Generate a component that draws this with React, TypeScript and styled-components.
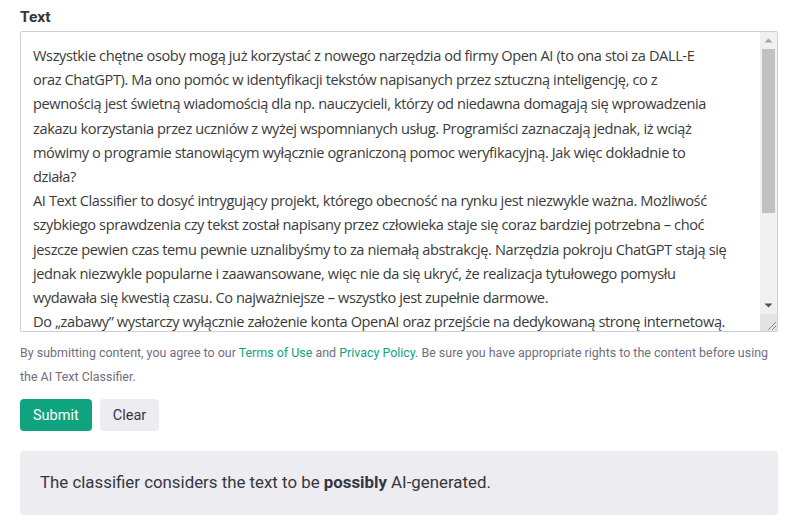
import React from 'react';
import styled, { createGlobalStyle } from 'styled-components';

const COLORS = {
  text: '#353740',
  muted: '#6e6e80',
  green: '#10a37f',
  grey: '#ececf1',
  border: '#cfcfd6',
  track: '#f0f0f0',
  thumb: '#c1c1c1',
};

const GlobalStyle = createGlobalStyle`
  html, body {
    margin: 0;
    padding: 0;
    background: #ffffff;
  }
  body {
    font-family: Roboto, "Liberation Sans", sans-serif;
    color: ${COLORS.text};
  }
`;

const Page = styled.div`
  padding: 6px 20px 16px 20px;
  display: flex;
  flex-direction: column;
`;

const Label = styled.label`
  font-size: 15.5px;
  font-weight: 700;
  line-height: 22px;
  margin-bottom: 3px;
`;

const TextBox = styled.div`
  box-sizing: border-box;
  height: 301px;
  border: 1px solid ${COLORS.border};
  border-radius: 2px;
  display: flex;
  overflow: hidden;
`;

const Content = styled.div`
  flex: 1;
  min-width: 0;
  padding: 11px 12px;
  overflow: hidden;
  white-space: pre;
  font-family: "Open Sans", "Noto Sans", sans-serif;
  font-size: 14.6px;
  letter-spacing: -0.4px;
  line-height: 24.2px;
  color: #3b3b3b;
`;

// the page is shot headless, where native scrollbars are hidden, so draw one
const ScrollBar = styled.div`
  width: 17px;
  flex: none;
  display: flex;
  flex-direction: column;
  background: ${COLORS.track};
`;

const ArrowButton = styled.div`
  height: 17px;
  flex: none;
  display: flex;
  align-items: center;
  justify-content: center;
`;

const Track = styled.div`
  flex: 1;
  padding: 0 2px;
`;

const Thumb = styled.div`
  height: 164px;
  background: ${COLORS.thumb};
`;

const Resizer = styled.div`
  height: 17px;
  flex: none;
  background: #e3e3e3;
  display: flex;
  align-items: flex-end;
  justify-content: flex-end;
`;

const Misspelled = styled.span`
  text-decoration: underline wavy #e0302a;
  text-decoration-thickness: 1px;
  text-underline-offset: 3px;
`;

const Note = styled.p`
  margin: 9px 0 0 0;
  font-size: 12.45px;
  line-height: 24px;
  color: ${COLORS.muted};
`;

const Link = styled.a`
  color: ${COLORS.green};
  text-decoration: none;
`;

const Actions = styled.div`
  display: flex;
  gap: 8px;
  margin-top: 10px;
`;

const Button = styled.button<{ primary?: boolean }>`
  height: 32px;
  padding: 0 13px;
  border: none;
  border-radius: 4px;
  font-family: Roboto, "Liberation Sans", sans-serif;
  font-size: 14.5px;
  cursor: pointer;
  background: ${({ primary }) => (primary ? COLORS.green : COLORS.grey)};
  color: ${({ primary }) => (primary ? '#ffffff' : COLORS.text)};
`;

const Result = styled.div`
  margin-top: 20px;
  background: ${COLORS.grey};
  border-radius: 4px;
  height: 64px;
  box-sizing: border-box;
  padding: 0 20px 3px 20px;
  display: flex;
  align-items: center;
  font-size: 16.85px;
  color: ${COLORS.text};
`;

const lines = [
  'Wszystkie chętne osoby mogą już korzystać z nowego narzędzia od firmy Open AI (to ona stoi za DALL-E',
  'oraz ChatGPT). Ma ono pomóc w identyfikacji tekstów napisanych przez sztuczną inteligencję, co z',
  'pewnością jest świetną wiadomością dla np. nauczycieli, którzy od niedawna domagają się wprowadzenia',
  'zakazu korzystania przez uczniów z wyżej wspomnianych usług. Programiści zaznaczają jednak, iż wciąż',
  'mówimy o programie stanowiącym wyłącznie ograniczoną pomoc weryfikacyjną. Jak więc dokładnie to',
  'działa?',
  'AI Text Classifier to dosyć intrygujący projekt, którego obecność na rynku jest niezwykle ważna. Możliwość',
  'szybkiego sprawdzenia czy tekst został napisany przez człowieka staje się coraz bardziej potrzebna – choć',
  'jeszcze pewien czas temu pewnie uznalibyśmy to za niemałą abstrakcję. Narzędzia pokroju ChatGPT stają się',
  'jednak niezwykle popularne i zaawansowane, więc nie da się ukryć, że realizacja tytułowego pomysłu',
  'wydawała się kwestią czasu. Co najważniejsze – wszystko jest zupełnie darmowe.',
];

const tail = [
  'Następnie wystarczy wkleić fragment tekstu liczący co najmniej 1000 znaków i kliknąć przycisk',
  '„Submit”. Po chwili narzędzie oceni, czy tekst został wygenerowany przez sztuczną inteligencję.',
  'Wynik przedstawiany jest w pięciostopniowej skali – od „bardzo mało prawdopodobne” aż po',
  '„prawdopodobnie wygenerowany przez AI”. Twórcy przyznają, że klasyfikator wciąż się myli.',
];

const Arrow: React.FC<{ down?: boolean; color: string }> = ({ down, color }) => (
  <svg width="9" height="5" viewBox="0 0 9 5">
    <polygon points={down ? '0.5,0.5 8.5,0.5 4.5,4.5' : '0.5,4.5 8.5,4.5 4.5,0.5'} fill={color} />
  </svg>
);

export default function App() {
  return (
    <>
      <GlobalStyle />
      <Page>
        <Label>Text</Label>
        <TextBox role="textbox" aria-multiline="true">
          <Content>
            {lines.join('\n') + '\n'}
            Do „zabawy” wystarczy wyłącznie założenie konta <Misspelled>OpenAI</Misspelled> oraz przejście na dedykowaną stronę internetową.
            {'\n' + tail.join('\n')}
          </Content>
          <ScrollBar>
            <ArrowButton>
              <Arrow color="#a3a3a3" />
            </ArrowButton>
            <Track>
              <Thumb />
            </Track>
            <ArrowButton>
              <Arrow down color="#505050" />
            </ArrowButton>
            <Resizer>
              <svg width="12" height="12" viewBox="0 0 12 12">
                <line x1="3" y1="11" x2="11" y2="3" stroke="#8c8c8c" strokeWidth="1" />
                <line x1="7" y1="11" x2="11" y2="7" stroke="#8c8c8c" strokeWidth="1" />
              </svg>
            </Resizer>
          </ScrollBar>
        </TextBox>
        <Note>
          By submitting content, you agree to our <Link href="#">Terms of Use</Link> and{' '}
          <Link href="#">Privacy Policy</Link>. Be sure you have appropriate rights to the content before using
          the AI Text Classifier.
        </Note>
        <Actions>
          <Button primary>Submit</Button>
          <Button>Clear</Button>
        </Actions>
        <Result>
          <span>
            The classifier considers the text to be <b>possibly</b> AI-generated.
          </span>
        </Result>
      </Page>
    </>
  );
}
